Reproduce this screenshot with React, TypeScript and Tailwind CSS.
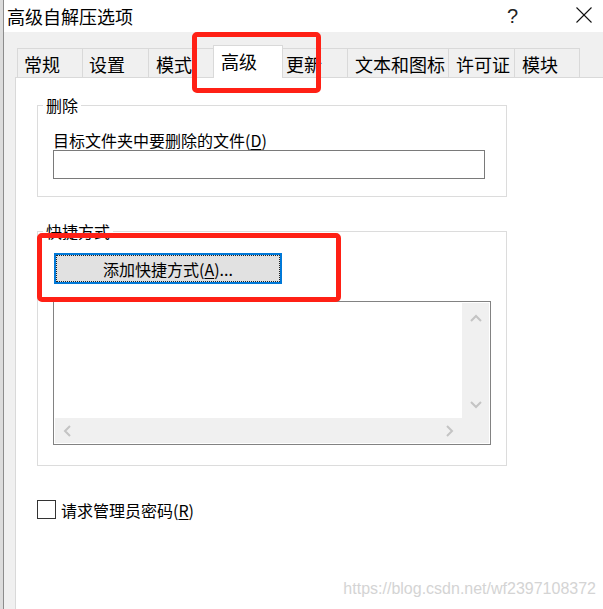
import React from "react";

const tabs = [
  { label: "常规", cls: "w-[65px] pl-[6px]" },
  { label: "设置", cls: "w-[66px] pl-[6px]" },
  { label: "模式", cls: "w-[65px] pl-[7px]" },
];

const tabsAfter = [
  { label: "更新", cls: "w-[64px] pl-[3px] border-l-0" },
  { label: "文本和图标", cls: "w-[101px] pl-[7px]" },
  { label: "许可证", cls: "w-[66px] pl-[7px]" },
  { label: "模块", cls: "w-[66px] pl-[7px] border-r" },
];

function Tab({ label, cls }: { label: string; cls: string }) {
  return (
    <div
      className={`flex h-[29px] shrink-0 items-center border-l border-t border-[#d9d9d9] pt-[1px] text-[18px] leading-[22px] text-black ${cls}`}
    >
      {label}
    </div>
  );
}

function Chevron({ dir }: { dir: "up" | "down" | "left" | "right" }) {
  const pts = {
    up: "1,7 6,2 11,7",
    down: "1,2 6,7 11,2",
    left: "7,1 2,6 7,11",
    right: "2,1 7,6 2,11",
  }[dir];
  const vertical = dir === "up" || dir === "down";
  return (
    <svg
      width={vertical ? 12 : 9}
      height={vertical ? 9 : 12}
      viewBox={vertical ? "0 0 12 9" : "0 0 9 12"}
      fill="none"
      stroke="#c4c4c4"
      strokeWidth="2"
    >
      <polyline points={pts} />
    </svg>
  );
}

export default function App() {
  return (
    <div className="relative flex h-[609px] w-[603px] overflow-hidden bg-white font-['Noto_Sans_CJK_SC','Noto_Sans',sans-serif] text-black">
      {/* window edge behind */}
      <div className="w-[4px] shrink-0 border-r border-[#8c8c8c] bg-[#dcdcdc]" />

      <div className="flex min-w-0 flex-1 flex-col">
        {/* title bar */}
        <div className="flex h-[32px] shrink-0 items-center bg-white">
          <span className="pl-[3px] text-[18px] leading-[22px]">高级自解压选项</span>
          <span className="ml-auto font-['Liberation_Sans',sans-serif] text-[20px] leading-[22px] font-light text-[#222]">
            ?
          </span>
          <svg className="-mt-[2px] ml-[58px] mr-[11px]" width="16" height="16" viewBox="0 0 16 16" stroke="#111" strokeWidth="1.1">
            <line x1="0.5" y1="0.5" x2="15.5" y2="15.5" />
            <line x1="15.5" y1="0.5" x2="0.5" y2="15.5" />
          </svg>
        </div>

        {/* dialog body */}
        <div className="flex flex-1 flex-col bg-[#f0f0f0] pl-[11px]">
          {/* tab strip */}
          <div className="mt-[13px] flex h-[32px] shrink-0 items-end pl-[2px]">
            {tabs.map((t) => (
              <Tab key={t.label} label={t.label} cls={t.cls} />
            ))}
            <div className="relative z-10 -mb-px flex h-[33px] w-[70px] shrink-0 items-center border-x border-t border-[#d9d9d9] bg-white pb-[2px] pl-[7px] text-[18px] leading-[22px]">
              高级
            </div>
            {tabsAfter.map((t) => (
              <Tab key={t.label} label={t.label} cls={t.cls} />
            ))}
          </div>

          {/* tab page */}
          <div className="flex flex-1 flex-col border-l border-t border-[#d9d9d9] bg-white">
            {/* 删除 */}
            <div className="ml-[21px] mt-[27px] flex h-[92px] w-[470px] flex-col border border-[#dcdcdc]">
              <span className="-mt-[10px] ml-[5px] w-fit bg-white px-[3px] text-[16px] leading-[18px]">删除</span>
              <span className="ml-[15px] mt-[17px] text-[16px] leading-[18px]">
                目标文件夹中要删除的文件(<u className="underline-offset-2">D</u>)
              </span>
              <div className="ml-[15px] mt-[1px] h-[29px] w-[432px] border border-[#7a7a7a] bg-white" />
            </div>

            {/* 快捷方式 */}
            <div className="ml-[21px] mt-[34px] flex h-[235px] w-[470px] flex-col border border-[#dcdcdc]">
              <span className="-mt-[10px] ml-[5px] w-fit bg-white px-[3px] text-[16px] leading-[18px]">快捷方式</span>
              <div className="ml-[16px] mt-[13px] h-[31px] w-[228px] border-2 border-[#0078d7] bg-[#e1e1e1]">
                <div className="flex h-full w-full items-center justify-center border border-dotted border-[#222] text-[16px] leading-[18px]">
                  添加快捷方式(<u className="underline-offset-2">A</u>)...
                </div>
              </div>
              <div className="ml-[15px] mt-[17px] flex h-[144px] w-[438px] flex-col border border-[#828282] bg-white p-[1px]">
                <div className="flex flex-1">
                  <div className="flex-1 bg-white" />
                  <div className="flex w-[27px] flex-col justify-between bg-[#f0f0f0]">
                    <div className="flex h-[30px] items-center justify-center">
                      <Chevron dir="up" />
                    </div>
                    <div className="flex h-[28px] items-center justify-center">
                      <Chevron dir="down" />
                    </div>
                  </div>
                </div>
                <div className="flex h-[25px] bg-[#f0f0f0]">
                  <div className="flex w-[25px] items-center justify-center">
                    <Chevron dir="left" />
                  </div>
                  <div className="flex-1" />
                  <div className="flex w-[25px] items-center justify-center">
                    <Chevron dir="right" />
                  </div>
                  <div className="w-[27px]" />
                </div>
              </div>
            </div>

            {/* 请求管理员密码 */}
            <div className="ml-[21px] mt-[34px] flex items-center gap-[5px]">
              <div className="h-[19px] w-[19px] border border-[#333] bg-white" />
              <span className="text-[16px] leading-[18px]">
                请求管理员密码(<u className="underline-offset-2">R</u>)
              </span>
            </div>
          </div>
        </div>
      </div>

      {/* annotation boxes */}
      <div className="pointer-events-none absolute left-[192px] top-[32px] h-[61px] w-[129px] rounded-[5px] border-[5px] border-[#ff2015]" />
      <div className="pointer-events-none absolute left-[37px] top-[233px] h-[69px] w-[304px] rounded-[5px] border-[5px] border-[#ff2015]" />

      {/* watermark */}
      <span className="pointer-events-none absolute bottom-[11px] right-[7px] font-['Liberation_Sans',sans-serif] text-[16px] leading-[18px] text-[#d4d4d4]">
        https://blog.csdn.net/wf2397108372
      </span>
    </div>
  );
}
